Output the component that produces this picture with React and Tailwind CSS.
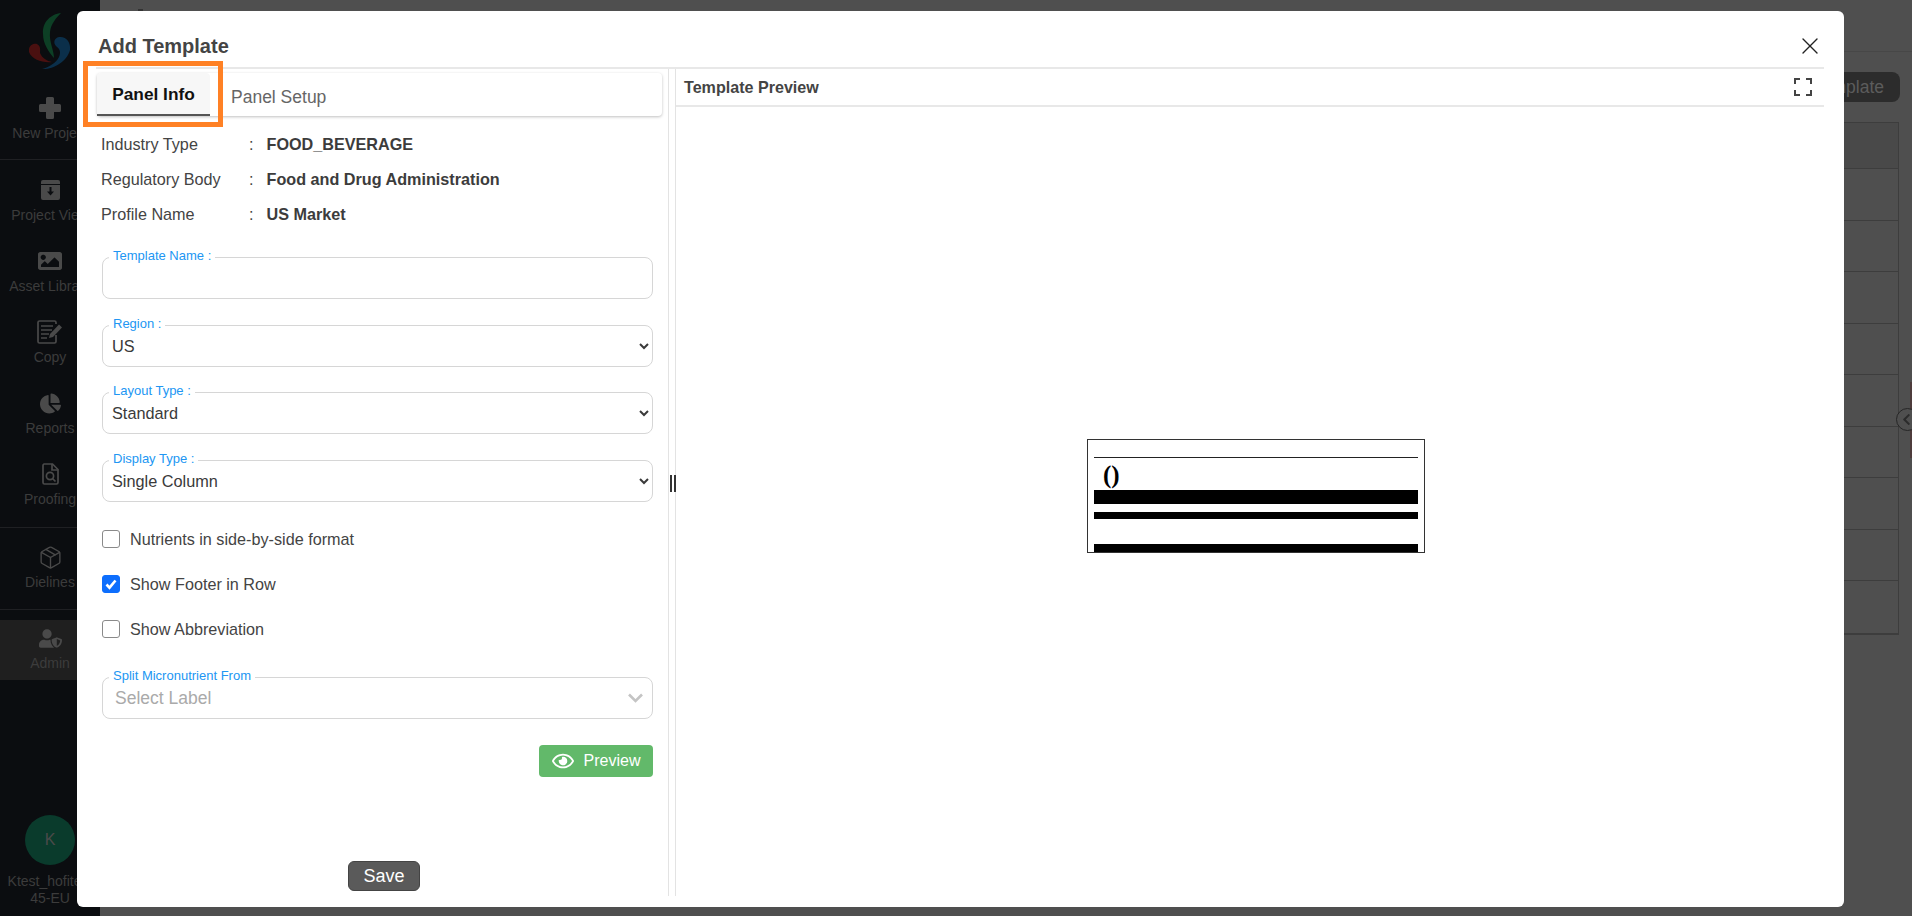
import { FaImage, FaChartPie, FaUserShield, FaRegEye, FaChevronLeft } from "react-icons/fa";
import { Package, X } from "lucide-react";

function PlusIcon() {
  return (
    <svg width="22" height="22" viewBox="0 0 22 22" fill="#4a4a4a">
      <path d="M8.500 0h5a1.500 1.500 0 0 1 1.500 1.500V7h5.500A1.500 1.500 0 0 1 22 8.500v5a1.500 1.500 0 0 1-1.500 1.500H15v5.500a1.500 1.500 0 0 1-1.500 1.500h-5A1.500 1.500 0 0 1 7 20.500V15H1.500A1.500 1.500 0 0 1 0 13.500v-5A1.500 1.500 0 0 1 1.500 7H7V1.500A1.500 1.500 0 0 1 8.500 0Z" />
    </svg>
  );
}

function ArchiveIcon() {
  return (
    <svg width="21" height="20" viewBox="0 0 21 20" fill="#4a4a4a">
      <path d="M3 0h15a2 2 0 0 1 2 2v2H1V2a2 2 0 0 1 2-2Z" />
      <path fillRule="evenodd" d="M1 5h19v13a2 2 0 0 1-2 2H3a2 2 0 0 1-2-2V5Zm8.500 2v4.500H7l3.500 4 3.500-4h-2.500V7h-2Z" />
    </svg>
  );
}

function CopyIcon() {
  return (
    <svg width="26" height="24" viewBox="0 0 26 24" fill="none" stroke="#4a4a4a" strokeWidth="1.700">
      <path d="M19 15v6.500a1.500 1.500 0 0 1-1.500 1.500h-15A1.500 1.500 0 0 1 1 21.500v-19A1.500 1.500 0 0 1 2.500 1h15A1.500 1.500 0 0 1 19 2.500V4" />
      <path d="M4 6h12M4 10h11M4 14h8M4 18h6" />
      <path d="M12 18l1-4 9-9.500 3 3-9 9.500-4 1Z" fill="#4a4a4a" stroke="none" />
    </svg>
  );
}

function ProofIcon() {
  return (
    <svg width="17" height="22" viewBox="0 0 17 22" fill="none" stroke="#4a4a4a" strokeWidth="1.700">
      <path d="M2 1h8.500L16 6.500V19.500a1.500 1.500 0 0 1-1.500 1.500h-12A1.500 1.500 0 0 1 1 19.500v-17A1.500 1.500 0 0 1 2 1Z" />
      <path d="M10 1v6h6" />
      <circle cx="8" cy="13" r="3.600" />
      <path d="M10.500 15.500l3 3" />
    </svg>
  );
}

const mainNav = [
  { label: "Project View", icon: <ArchiveIcon /> },
  { label: "Asset Library", icon: <FaImage size={24} color="#4a4a4a" /> },
  { label: "Copy", icon: <CopyIcon /> },
  { label: "Reports", icon: <FaChartPie size={21} color="#4a4a4a" /> },
  { label: "Proofing", icon: <ProofIcon /> },
];

function NavItem({ label, icon, className = "" }) {
  return (
    <div className={`flex flex-col items-center ${className}`}>
      <div className="h-6 flex items-center justify-center">{icon}</div>
      <div className="mt-1 h-[18px] leading-[18px] text-sm text-[#3c3c3c] whitespace-nowrap">{label}</div>
    </div>
  );
}

function Sidebar() {
  return (
    <div className="w-[100px] h-full shrink-0 bg-[#0b0d10] flex flex-col overflow-hidden">
      <div className="h-[96px] pt-[12px] flex justify-center">
        <svg width="42" height="60" viewBox="30 12 42 60">
          <path fill="#0d3f25" d="M62 13C52 14 43 22 44 34C44 44 50 52 55 58C55 50 50 42 51 32C52 24 57 18 62 13Z" />
          <path fill="#4a1010" d="M53 62C44 63 33 60 30 52C29 46 34 43 38 44C42 46 41 50 41 53C43 58 48 61 53 62Z" />
          <path fill="#0b2f4a" d="M43 69C53 70 68 62 71 50C72 42 67 36 60 37C55 38 54 43 57 46C61 49 62 52 60 57C57 63 50 67 43 69Z" />
        </svg>
      </div>
      <div className="h-[64px] border-b border-[#1f2023]">
        <NavItem label="New Project" icon={<PlusIcon />} />
      </div>
      <div className="h-[368px] pt-[18px] border-b border-[#1f2023]">
        {mainNav.map((item) => (
          <NavItem key={item.label} label={item.label} icon={item.icon} className="h-[71px]" />
        ))}
      </div>
      <div className="h-[82px] pt-[17px] border-b border-[#1f2023]">
        <NavItem label="Dielines" icon={<Package size={25} strokeWidth={1.300} color="#4a4a4a" />} />
      </div>
      <div className="mt-[10px] h-[60px] pt-[6px] bg-[#1f1f1f]">
        <NavItem label="Admin" icon={<FaUserShield size={23} color="#4a4a4a" />} />
      </div>
      <div className="mt-auto pb-[9px] flex flex-col items-center">
        <div className="w-[50px] h-[50px] rounded-full bg-[#0a3b2c] flex items-center justify-center text-[#4a4a4a] text-base">
          K
        </div>
        <div className="mt-[8px] text-sm leading-[17px] text-[#3c3c3c] text-center whitespace-nowrap">Ktest_hofitest</div>
        <div className="text-sm leading-[17px] text-[#3c3c3c] text-center">45-EU</div>
      </div>
    </div>
  );
}

function Background() {
  return (
    <div className="flex-1 h-full flex flex-col min-w-0">
      <div className="h-[52px] border-b border-[#474747] pt-[9px] pl-[38px]">
        <div className="w-[5px] h-[2px] bg-[#333]" />
      </div>
      <div className="pt-[20px] pr-[12px] flex justify-end">
        <div className="w-[200px] h-[30px] rounded-lg bg-[#2c2c2c] text-[#5c5c5c] flex items-center justify-end pr-[16px] text-[17.5px]">
          Template
        </div>
      </div>
      <div className="mt-[20px] mr-[13px] ml-[20px] border border-[#3d3d3d] border-b-2">
        <div className="h-[46px] bg-[#494949] border-b border-[#3d3d3d]" />
        {[...Array(9)].map((_, i) => (
          <div key={i} className="h-[51.500px] border-b border-[#3d3d3d] last:border-b-0" />
        ))}
      </div>
    </div>
  );
}

function FloatField({ label, children }) {
  return (
    <div className="relative h-[42px] w-[551px]">
      <span className="absolute left-[7px] -top-[9px] px-[4px] bg-white text-[13px] leading-[15px] text-[#2196f3] whitespace-nowrap">
        {label}
      </span>
      {children}
    </div>
  );
}

function SelectField({ label, value }) {
  return (
    <FloatField label={label}>
      <select
        defaultValue={value}
        className="w-full h-full pl-[5px] pr-[4px] rounded-lg border border-[#d6d6d6] bg-white text-[16.300px] text-[#3a3a3a] appearance-auto"
      >
        <option>{value}</option>
      </select>
    </FloatField>
  );
}

function CheckRow({ label, checked }) {
  return (
    <label className="flex items-center h-[18px] text-[16.200px] text-[#444]">
      <span className="relative w-[18px] h-[18px] mr-[10px] flex">
        <input
          type="checkbox"
          defaultChecked={checked}
          className="peer appearance-none w-[18px] h-[18px] rounded-[3px] border border-[#8a8a8a] bg-white checked:bg-[#0d6efd] checked:border-[#0d6efd]"
        />
        <svg
          className="absolute inset-0 hidden peer-checked:block"
          viewBox="0 0 18 18"
          fill="none"
          stroke="#fff"
          strokeWidth="2.600"
        >
          <path d="M4.500 9.500l3 3.200 6-7.200" />
        </svg>
      </span>
      {label}
    </label>
  );
}

function InfoRow({ label, value }) {
  return (
    <div className="flex items-center h-[35px] text-[16.200px] text-[#444]">
      <span className="w-[148px]">{label}</span>
      <span className="w-[17.500px]">:</span>
      <span className="font-bold text-[#3c3c3c]">{value}</span>
    </div>
  );
}

function LeftPane() {
  return (
    <div className="w-[573px] shrink-0 border-r border-[#e3e3e3] flex flex-col">
      <div className="mt-[4px] ml-[1px] w-[565px] h-[43px] rounded bg-white flex shadow-[0_1px_3px_rgba(0,0,0,0.25)]">
        <div className="w-[113px] h-full pt-[2px] rounded-t bg-[#f7f7f7] border-b-2 border-[#555] flex items-center justify-center text-[17.300px] font-bold text-[#111]">
          Panel Info
        </div>
        <div className="ml-[21px] pt-[5px] flex items-center text-[17.500px] text-[#666]">Panel Setup</div>
      </div>
      <div className="mt-[11px] ml-[5px] flex flex-col">
        <InfoRow label="Industry Type" value="FOOD_BEVERAGE" />
        <InfoRow label="Regulatory Body" value="Food and Drug Administration" />
        <InfoRow label="Profile Name" value="US Market" />
      </div>
      <div className="mt-[25px] ml-[6px] flex flex-col">
        <FloatField label="Template Name :">
          <input className="w-full h-full rounded-lg border border-[#d6d6d6] bg-white" />
        </FloatField>
        <div className="mt-[26px]">
          <SelectField label="Region :" value="US" />
        </div>
        <div className="mt-[25px]">
          <SelectField label="Layout Type :" value="Standard" />
        </div>
        <div className="mt-[26px]">
          <SelectField label="Display Type :" value="Single Column" />
        </div>
        <div className="mt-[28px] flex flex-col gap-[27px]">
          <CheckRow label="Nutrients in side-by-side format" />
          <CheckRow label="Show Footer in Row" checked />
          <CheckRow label="Show Abbreviation" />
        </div>
        <div className="mt-[39px]">
          <FloatField label="Split Micronutrient From">
            <div className="w-full h-full rounded-lg border border-[#d6d6d6] bg-white flex items-center justify-between pl-[12px] pr-[9px]">
              <span className="text-[17.500px] text-[#aaa]">Select Label</span>
              <svg width="15" height="10" viewBox="0 0 15 10" fill="none" stroke="#c4c4c4" strokeWidth="2.600">
                <path d="M1 1.500l6.500 6.500 6.500-6.500" />
              </svg>
            </div>
          </FloatField>
        </div>
        <div className="mt-[26px] w-[551px] flex justify-end">
          <button className="w-[114px] h-[32px] rounded bg-[#62b96a] text-white text-base flex items-center justify-center gap-[10px]">
            <FaRegEye size={22} />
            Preview
          </button>
        </div>
      </div>
      <div className="mt-auto mb-[5px] flex justify-center pl-[4px]">
        <button className="w-[72px] h-[30px] rounded-md bg-[#5a5a5a] border border-[#444] text-white text-[18px] leading-none">
          Save
        </button>
      </div>
    </div>
  );
}

function PreviewDiagram() {
  return (
    <div className="w-[338px] h-[114px] border border-[#333] px-[6px] pt-[17px] flex flex-col font-['Liberation_Serif',serif]">
      <div className="h-px bg-[#222]" />
      <div className="h-[32px] pl-[9px] flex items-end text-[25px] leading-[30px] font-bold text-black">()</div>
      <div className="h-[14px] bg-black" />
      <div className="mt-[8px] h-[7px] bg-black" />
      <div className="mt-[25px] h-[8px] bg-black" />
    </div>
  );
}

function RightPane() {
  return (
    <div className="flex-1 ml-[6px] border-l border-[#e3e3e3] flex flex-col min-w-0">
      <div className="h-[38px] border-b-2 border-[#e8e8e8] flex items-center justify-between pl-[8px] pr-[12px]">
        <span className="text-[16.100px] font-bold text-[#444]">Template Preview</span>
        <svg width="18" height="18" viewBox="0 0 18 18" fill="none" stroke="#444" strokeWidth="2">
          <path d="M1 6V1h5M12 1h5v5M17 12v5h-5M6 17H1v-5" />
        </svg>
      </div>
      <div className="flex-1 flex items-center justify-center pl-[12px] pb-[11px]">
        <PreviewDiagram />
      </div>
    </div>
  );
}

export default function App() {
  return (
    <div className="relative h-screen w-full overflow-hidden flex bg-[#4f4f4f] font-['Liberation_Sans',Arial,sans-serif]">
      <Sidebar />
      <Background />

      {/* collapse handle on the right edge */}
      <div className="absolute left-[1910px] top-[382px] w-[2px] h-[76px] bg-[#4e3c3c]" />
      <div className="absolute left-[1896px] top-[408px] w-[23px] h-[23px] rounded-full border border-[#262626] bg-[#4f4f4f] flex items-center pl-[3px]">
        <FaChevronLeft size={13} color="#2b2b2b" />
      </div>

      {/* modal */}
      <div className="absolute left-[77px] top-[11px] w-[1767px] h-[896px] rounded-md bg-white flex flex-col">
        <div className="h-[56px] shrink-0 pl-[21px] pr-[20px] flex items-center justify-between pt-[13px]">
          <h1 className="text-xl font-bold text-[#444]">Add Template</h1>
          <X size={28} strokeWidth={1.200} color="#222" />
        </div>
        <div className="h-[829px] ml-[19px] mr-[20px] border-t-2 border-[#e8e8e8] flex">
          <LeftPane />
          <div className="absolute left-[593px] top-[464px] w-[6px] h-[17px] border-x-2 border-[#333]" />
          <RightPane />
        </div>
      </div>

      {/* orange highlight round the first tab */}
      <div className="absolute left-[83px] top-[61px] w-[140px] h-[66px] border-[5px] border-[#ff8125]" />
    </div>
  );
}
